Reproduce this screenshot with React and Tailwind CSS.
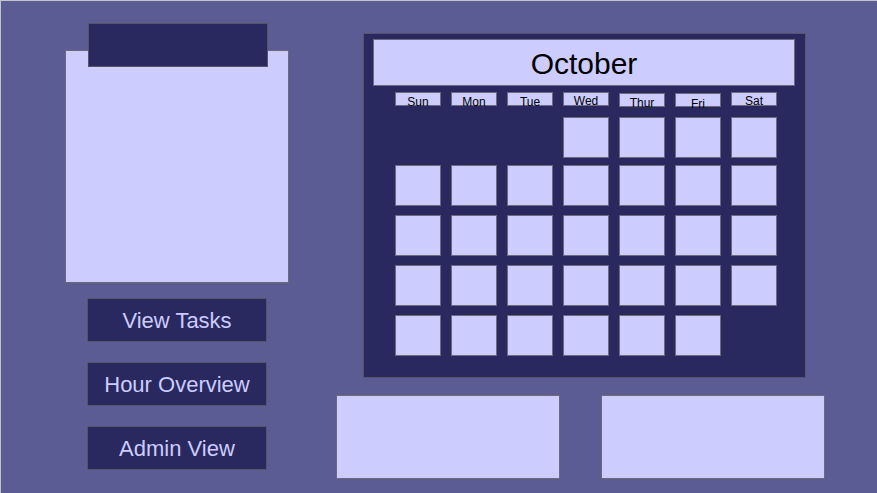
import React from "react";

const days = [
  { name: "Sun", box: "", text: "" },
  { name: "Mon", box: "", text: "" },
  { name: "Tue", box: "", text: "" },
  { name: "Wed", box: "", text: "-mt-[1px]" },
  { name: "Thur", box: "mt-[1px]", text: "" },
  { name: "Fri", box: "mt-[1px]", text: "mt-[1px]" },
  { name: "Sat", box: "", text: "-mt-[1px]" },
];

// October starts on a Wednesday: 3 blank slots, then 31 days
const slots = [...Array(3).fill(null), ...Array.from({ length: 31 }, (_, i) => i + 1)];
const weeks = [0, 1, 2, 3, 4].map((w) => slots.slice(w * 7, w * 7 + 7));
const weekGap = ["mt-[10px]", "mt-[7px]", "mt-[9px]", "mt-[9px]", "mt-[9px]"];

const Calendar = () => {
  return (
    <div className="w-[443px] h-[345px] bg-[#29295f] border border-[#55556a] pl-[9px] pt-[5px]">
      <div className="w-[422px] h-[47px] bg-[#ccccff] border border-[#6b6b7b] flex items-center justify-center text-[30px] leading-none pt-[3px] text-black">
        October
      </div>

      <div className="ml-[22px] mt-[6px] flex gap-[10px] items-start">
        {days.map((d) => (
          <div
            key={d.name}
            className={`w-[46px] h-[14px] bg-[#ccccff] border border-[#6b6b7b] text-[12px] leading-[14px] text-center text-black overflow-visible ${d.box}`}
          >
            <div className={`pt-[2px] ${d.text}`}>{d.name}</div>
          </div>
        ))}
      </div>

      <div className="ml-[22px] flex flex-col">
        {weeks.map((week, w) => (
          <div key={w} className={`flex gap-[10px] ${weekGap[w]}`}>
            {week.map((day, i) =>
              day === null ? (
                <div key={`blank-${i}`} className="w-[46px] h-[41px]" />
              ) : (
                <div key={day} className="w-[46px] h-[41px] bg-[#ccccff] border border-[#6b6b7b]" />
              )
            )}
          </div>
        ))}
      </div>
    </div>
  );
};

const NavButton = ({ label }) => (
  <button className="w-[180px] h-[44px] bg-[#29295f] border border-[#55556a] text-[#ccccff] text-[22px] flex items-center justify-center">
    {label}
  </button>
);

export default function App() {
  return (
    <div
      className="w-[877px] h-[493px] overflow-hidden bg-[#5c5c94] border-t border-l border-[#c4c4c8] flex items-start"
      style={{ fontFamily: '"Liberation Sans", Arial, sans-serif' }}
    >
      {/* left column: note panel + navigation */}
      <div className="ml-[64px] pt-[22px] w-[224px] flex flex-col">
        <div className="relative z-10 ml-[23px] w-[180px] h-[44px] bg-[#29295f] border border-[#55556a]" />
        <div className="-mt-[17px] w-[224px] h-[233px] bg-[#ccccff] border border-[#6b6b7b]" />
        <div className="mt-[15px] ml-[22px] flex flex-col gap-[20px]">
          <NavButton label="View Tasks" />
          <NavButton label="Hour Overview" />
          <NavButton label="Admin View" />
        </div>
      </div>

      {/* right column: calendar + summary boxes */}
      <div className="ml-[47px] pt-[32px] flex flex-col">
        <div className="ml-[27px]">
          <Calendar />
        </div>
        <div className="mt-[17px] flex gap-[41px]">
          <div className="w-[224px] h-[84px] bg-[#ccccff] border border-[#6b6b7b]" />
          <div className="w-[224px] h-[84px] bg-[#ccccff] border border-[#6b6b7b]" />
        </div>
      </div>
    </div>
  );
}
